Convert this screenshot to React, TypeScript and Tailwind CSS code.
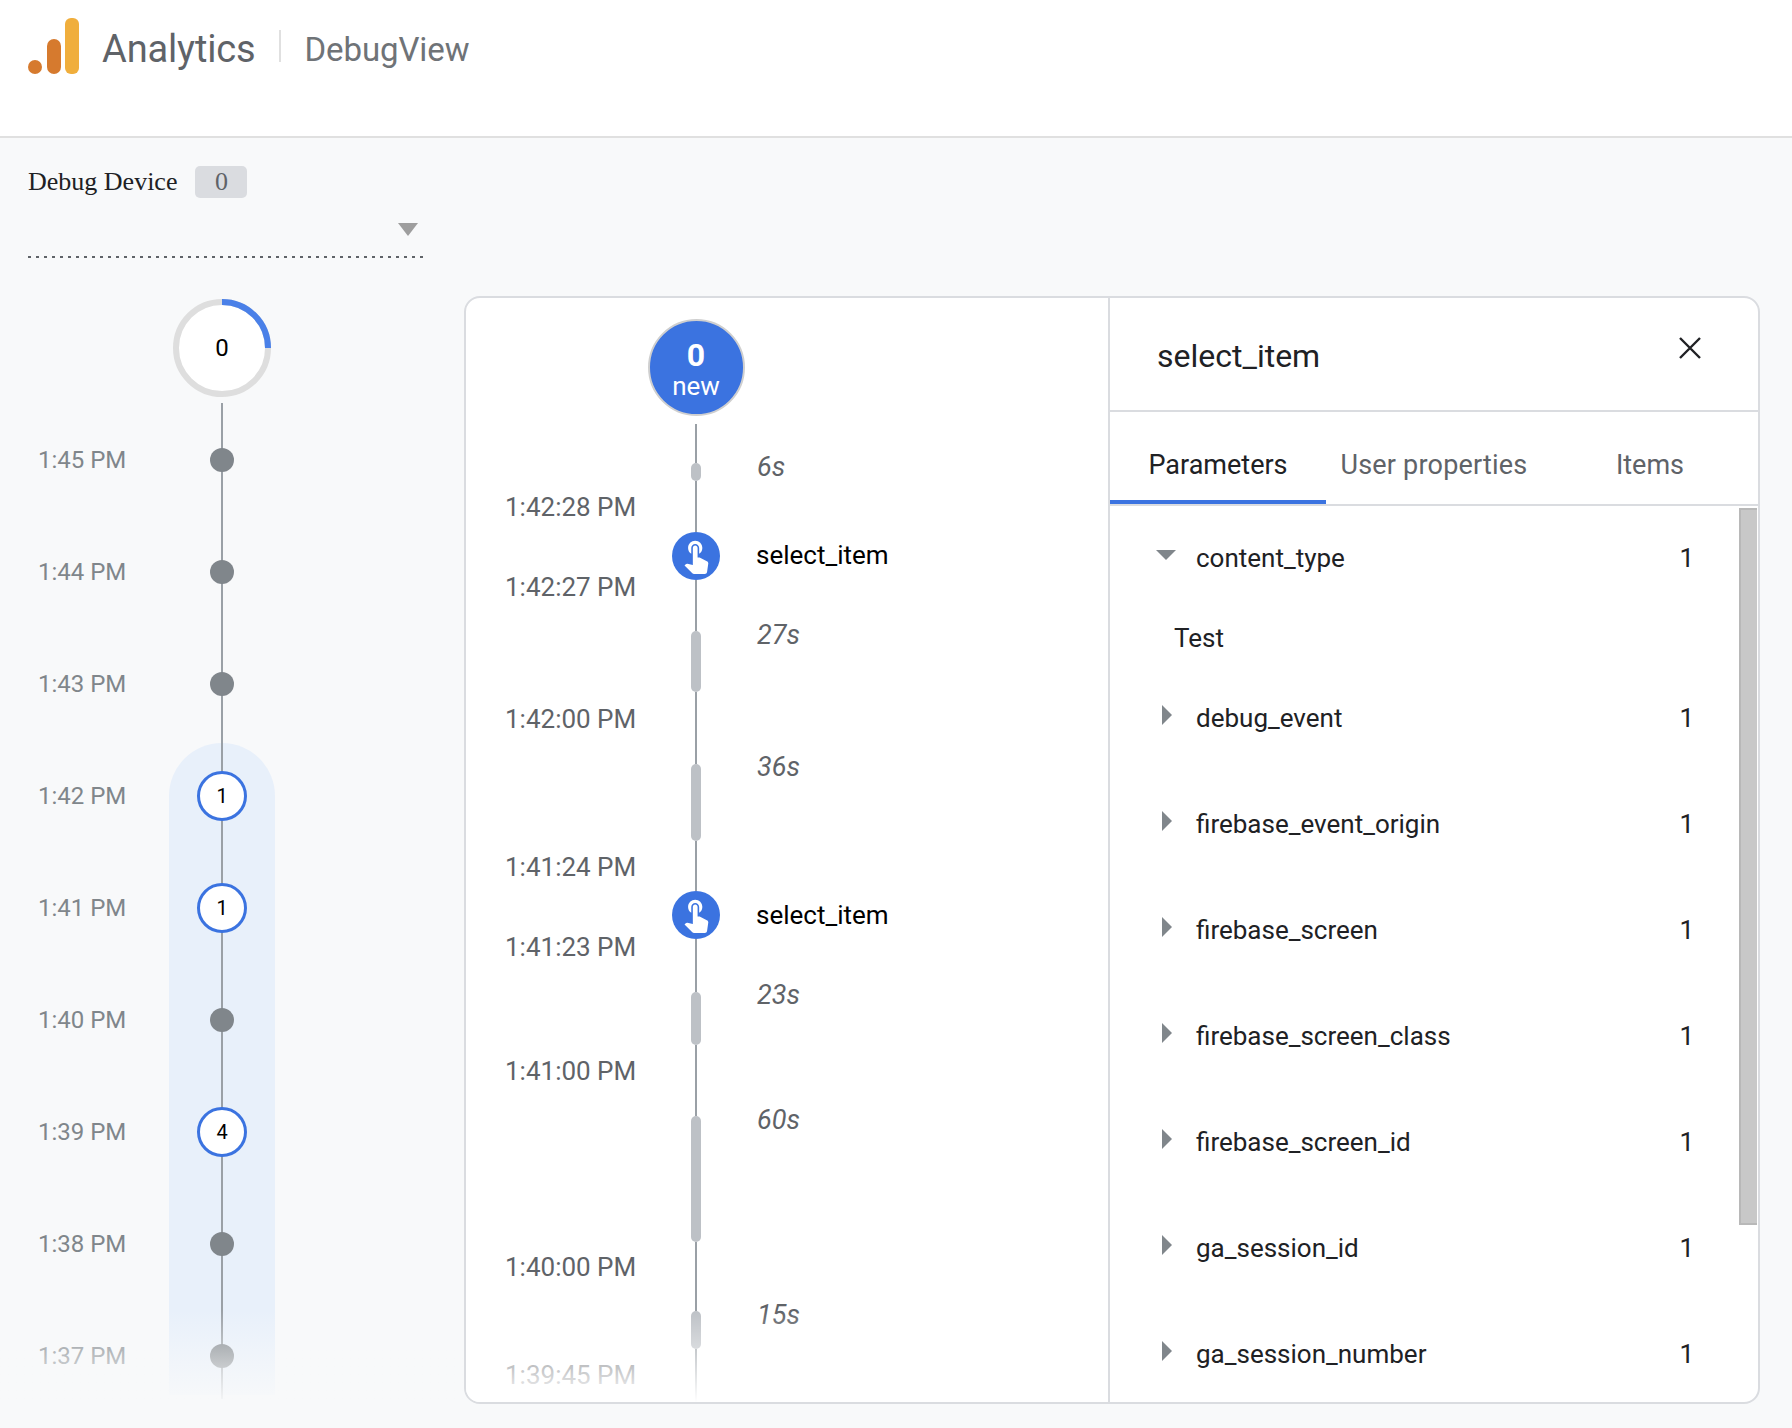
const minutes = [
  { time: "1:45 PM" },
  { time: "1:44 PM" },
  { time: "1:43 PM" },
  { time: "1:42 PM", count: 1 },
  { time: "1:41 PM", count: 1 },
  { time: "1:40 PM" },
  { time: "1:39 PM", count: 4 },
  { time: "1:38 PM" },
  { time: "1:37 PM" },
];

const seconds = [
  { label: "1:42:28 PM", gap: "mt-0" },
  { label: "1:42:27 PM", gap: "mt-[48px]" },
  { label: "1:42:00 PM", gap: "mt-[100px]" },
  { label: "1:41:24 PM", gap: "mt-[116px]" },
  { label: "1:41:23 PM", gap: "mt-[48px]" },
  { label: "1:41:00 PM", gap: "mt-[92px]" },
  { label: "1:40:00 PM", gap: "mt-[164px]" },
  { label: "1:39:45 PM", gap: "mt-[76px]" },
];

const stream = [
  { type: "line", size: "h-[39px]" },
  { type: "bar", size: "h-[18px]" },
  { type: "line", size: "h-[51px]" },
  { type: "event" },
  { type: "line", size: "h-[51px]" },
  { type: "bar", size: "h-[61px]" },
  { type: "line", size: "h-[72px]" },
  { type: "bar", size: "h-[77px]" },
  { type: "line", size: "h-[50px]" },
  { type: "event" },
  { type: "line", size: "h-[53px]" },
  { type: "bar", size: "h-[53px]" },
  { type: "line", size: "h-[71px]" },
  { type: "bar", size: "h-[126px]" },
  { type: "line", size: "h-[69px]" },
  { type: "bar", size: "h-[38px]" },
  { type: "line", size: "h-[53px]" },
];

const notes = [
  { text: "6s", gap: "mt-0" },
  { text: "select_item", gap: "mt-[56px]", event: true },
  { text: "27s", gap: "mt-[48px]" },
  { text: "36s", gap: "mt-[100px]" },
  { text: "select_item", gap: "mt-[116px]", event: true },
  { text: "23s", gap: "mt-[48px]" },
  { text: "60s", gap: "mt-[93px]" },
  { text: "15s", gap: "mt-[163px]" },
];

const params = [
  "debug_event",
  "firebase_event_origin",
  "firebase_screen",
  "firebase_screen_class",
  "firebase_screen_id",
  "ga_session_id",
  "ga_session_number",
];

const TouchIcon = () => (
  <svg viewBox="0 0 24 24" className="w-[38px] h-[38px] -mt-[3px]" fill="#fff">
    <path d="M9 11.24V7.5C9 6.12 10.12 5 11.5 5S14 6.12 14 7.5v3.74c1.21-.81 2-2.18 2-3.74C16 5.01 13.99 3 11.5 3S7 5.01 7 7.5c0 1.56.79 2.93 2 3.74zm9.84 4.63l-4.54-2.26c-.17-.07-.35-.11-.54-.11H13v-6c0-.83-.67-1.5-1.5-1.5S10 6.67 10 7.5v10.74l-3.43-.72c-.08-.01-.15-.03-.24-.03-.31 0-.59.13-.79.33l-.79.8 4.94 4.94c.27.27.65.44 1.06.44h6.79c.75 0 1.33-.55 1.44-1.28l.75-5.27c.01-.07.02-.14.02-.2 0-.62-.38-1.16-.91-1.38z" />
  </svg>
);

const Logo = () => (
  <svg viewBox="0 0 51 56" className="w-[51px] h-[56px] shrink-0">
    <circle cx="7" cy="49" r="7" fill="#d67a2e" />
    <rect x="19" y="21" width="14" height="35" rx="7" fill="#d67a2e" />
    <rect x="37" y="0" width="14" height="56" rx="6" fill="#f0ae3c" />
  </svg>
);

const Header = () => (
  <header className="h-[138px] bg-white border-b-2 border-[#e0e0e0] pl-[28px] pt-[18px] flex items-start">
    <Logo />
    <span className="ml-[23px] mt-[7px] text-[38px] leading-[48px] tracking-[-0.15px] text-[#5f6368]">Analytics</span>
    <div className="ml-[23px] mt-[12px] w-[2px] h-[32px] bg-[#e0e0e0]" />
    <span className="ml-[24px] mt-[8px] text-[33px] leading-[48px] tracking-[-0.1px] text-[#6f7377]">DebugView</span>
  </header>
);

const Sidebar = () => (
  <aside className="w-[464px] shrink-0 pt-[28px]">
    <div className="pl-[28px] flex items-center font-['Liberation_Serif',serif]">
      <span className="text-[26px] leading-[32px] text-[#202124]">Debug Device</span>
      <span className="ml-[18px] w-[52px] h-[32px] rounded-[5px] bg-[#dadce0] text-center text-[26px] leading-[32px] text-[#5f6368]">0</span>
    </div>
    <div className="ml-[28px] w-[395px] h-[60px] flex flex-col justify-between pt-[25px]">
      <div className="self-end mr-[5px] w-0 h-0 border-x-[10.5px] border-x-transparent border-t-[13px] border-t-[#9e9e9e]" />
      <div className="h-[2px] bg-[repeating-linear-gradient(90deg,#5f6368_0,#5f6368_3.5px,transparent_3.5px,transparent_8px)]" />
    </div>
    <div className="mt-[41px] ml-[173px] relative w-[98px] h-[98px]">
      <svg viewBox="0 0 98 98" className="w-[98px] h-[98px]">
        <circle cx="49" cy="49" r="46" fill="#fff" stroke="#dedede" strokeWidth="6" />
        <path d="M49 3A46 46 0 0 1 95 49" fill="none" stroke="#4a80e8" strokeWidth="6" />
      </svg>
      <span className="absolute inset-0 flex items-center justify-center text-[24px] text-black">0</span>
    </div>
    <div className="relative mt-[6px] h-[1023px]">
      <div className="absolute left-[169px] top-[340px] w-[106px] h-[652px] rounded-t-[53px] bg-[#e8f0fa]" />
      <div className="absolute left-[221px] top-0 w-[2px] h-[996px] bg-[#9aa0a6]" />
      <div className="relative pt-[1px]">
        {minutes.map((m) => (
          <div key={m.time} className="h-[112px] flex items-center pl-[38px]">
            <span className="w-[184px] text-[24px] leading-[32px] text-[#80868b]">{m.time}</span>
            {m.count ? (
              <span className="-ml-[25px] w-[50px] h-[50px] rounded-full bg-white border-[3.5px] border-[#3b73e0] flex items-center justify-center text-[20px] text-black">
                {m.count}
              </span>
            ) : (
              <span className="-ml-[12px] w-[24px] h-[24px] rounded-full bg-[#80868b]" />
            )}
          </div>
        ))}
      </div>
      <div className="absolute left-0 right-0 top-[907px] h-[95px] bg-linear-to-b from-[#f8f9fa00] to-[#f8f9fa]" />
    </div>
  </aside>
);

const EventStream = () => (
  <div className="relative w-[642px] shrink-0 flex overflow-hidden">
    <div className="w-[181px] pl-[39px] pt-[193px] shrink-0">
      {seconds.map((s) => (
        <div key={s.label} className={`${s.gap} h-[32px] text-[26px] leading-[32px] whitespace-nowrap text-[#5f6368]`}>
          {s.label}
        </div>
      ))}
    </div>
    <div className="w-[98px] pt-[21px] flex flex-col items-center shrink-0">
      <div className="w-[97px] h-[97px] rounded-full bg-[#3b73e0] border-[2px] border-[#cfcfcf] mb-[8px] pt-[2px] flex flex-col items-center justify-center text-white">
        <span className="text-[32px] leading-[34px] font-bold">0</span>
        <span className="text-[26px] leading-[28px]">new</span>
      </div>
      {stream.map((s, i) =>
        s.type === "event" ? (
          <div key={i} className="w-[48px] h-[48px] rounded-full bg-[#3b73e0] flex items-center justify-center">
            <TouchIcon />
          </div>
        ) : s.type === "bar" ? (
          <div key={i} className={`${s.size} w-[10px] rounded-[5px] bg-[#bdc1c6]`} />
        ) : (
          <div key={i} className={`${s.size} w-[2px] bg-[#9aa0a6]`} />
        )
      )}
    </div>
    <div className="ml-[11px] pt-[153px]">
      {notes.map((n, i) => (
        <div
          key={i}
          className={`${n.gap} h-[32px] leading-[32px] ${n.event ? "text-[26px] text-black" : "pl-[1px] text-[27px] italic text-[#5f6368]"}`}
        >
          {n.text}
        </div>
      ))}
    </div>
    <div className="absolute left-0 right-0 bottom-0 h-[92px] bg-linear-to-b from-[#ffffff00] to-white" />
  </div>
);

const ParamRow = ({ name, open }: { name: string; open?: boolean }) => (
  <div className="h-[32px] flex items-center text-[26px] leading-[32px] text-[#202124]">
    <div className="w-[20px] ml-[46px] h-[32px] flex justify-center pt-[3px] shrink-0">
      {open ? (
        <div className="mt-[5px] w-0 h-0 border-x-[10px] border-x-transparent border-t-[10px] border-t-[#80868b]" />
      ) : (
        <div className="ml-[2px] w-0 h-0 border-y-[10px] border-y-transparent border-l-[10px] border-l-[#80868b]" />
      )}
    </div>
    <span className="ml-[20px] flex-1">{name}</span>
    <span className="mr-[45px]">1</span>
  </div>
);

const Details = () => (
  <div className="flex-1 min-w-0 border-l-2 border-[#dadce0] flex flex-col">
    <div className="h-[114px] shrink-0 border-b-2 border-[#dadce0] flex items-start justify-between pl-[47px] pr-[57px]">
      <span className="mt-[40px] text-[32px] leading-[36px] text-[#202124]">select_item</span>
      <svg viewBox="0 0 22 22" className="mt-[39px] w-[22px] h-[22px]" stroke="#202124" strokeWidth="2.4">
        <path d="M1 1l20 20M21 1L1 21" />
      </svg>
    </div>
    <div className="h-[94px] shrink-0 border-b-2 border-[#dadce0] flex">
      {["Parameters", "User properties", "Items"].map((t, i) => (
        <div
          key={t}
          className={`w-[216px] h-[92px] flex justify-center pt-[37px] text-[27px] leading-[32px] ${
            i === 0 ? "border-b-4 border-[#3b73e0] text-[#202124]" : i === 1 ? "tracking-[0.2px] text-[#5f6368]" : "text-[#5f6368]"
          }`}
        >
          {t}
        </div>
      ))}
    </div>
    <div className="flex-1 flex min-h-0">
      <div className="flex-1 min-w-0 pt-[36px] overflow-hidden">
        <ParamRow name="content_type" open />
        <div className="mt-[48px] h-[32px] pl-[64px] text-[26px] leading-[32px] text-[#202124]">Test</div>
        <div className="mt-[48px] flex flex-col gap-[74px]">
          {params.map((p) => (
            <ParamRow key={p} name={p} />
          ))}
        </div>
      </div>
      <div className="w-[18px] h-[717px] mt-[2px] mr-[1px] shrink-0 bg-[#c8c8c8] border-l-2 border-t-2 border-b-2 border-[#b8b8b8]" />
    </div>
  </div>
);

export default function App() {
  return (
    <div className="w-[1792px] h-[1428px] overflow-hidden bg-[#f8f9fa] font-['Roboto',sans-serif]">
      <Header />
      <div className="flex">
        <Sidebar />
        <main className="mt-[158px] w-[1296px] h-[1108px] rounded-[16px] border-2 border-[#dadce0] bg-white flex overflow-hidden">
          <EventStream />
          <Details />
        </main>
      </div>
    </div>
  );
}
